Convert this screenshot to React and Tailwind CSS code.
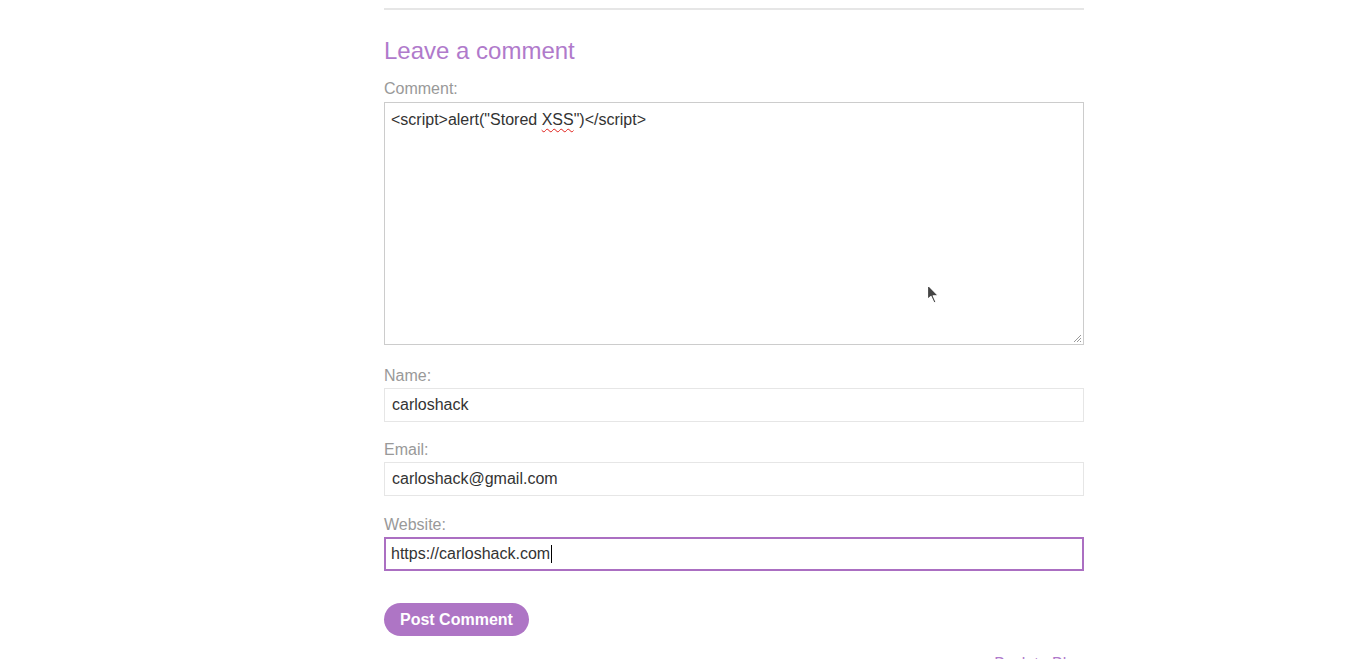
import React from 'react';

const font = { fontFamily: '"Liberation Sans", Arial, sans-serif' };

function Field({ label, children, focused }) {
    return (
        <div className="mt-[21px]">
            <div className="text-[16px] leading-[20px] text-[#999999]">{label}</div>
            <div
                className={`mt-[2px] h-[34px] flex items-center text-[16px] text-[#333333] bg-white ${
                    focused ? 'border-2 border-[#ab6fc2] px-[5px]' : 'border border-[#e6e6e6] px-[7px]'
                }`}
            >
                {children}
            </div>
        </div>
    );
}

export default function App() {
    return (
        <div className="min-h-screen bg-white relative" style={font}>
            <div className="w-[700px] ml-[384px] pt-[8px]">
                {/* divider */}
                <div className="h-[2px] bg-[#e6e6e6]" />

                <h2 className="mt-[26px] text-[24px] leading-[29px] text-[#b07acb]">Leave a comment</h2>

                <div className="mt-[14px] text-[16px] leading-[20px] text-[#999999]">Comment:</div>
                <div className="relative mt-[3px] h-[243px] border border-[#cccccc] px-[6px] pt-[7px] text-[16px] leading-[20px] text-[#333333]">
                    {'<script>alert("Stored '}
                    <span className="underline decoration-wavy decoration-[#e0201a] decoration-1 underline-offset-[3px]">XSS</span>
                    {'")</script>'}
                    {/* resize grip */}
                    <svg className="absolute right-[1px] bottom-[1px]" width="10" height="10" viewBox="0 0 10 10">
                        <path d="M9 2L2 9M9 5L5 9M9 8L8 9" stroke="#999" strokeWidth="1" />
                    </svg>
                </div>

                <Field label="Name:">carloshack</Field>
                <div className="-mt-[3px]">
                    <Field label="Email:">carloshack@gmail.com</Field>
                </div>
                <div className="-mt-[2px]">
                    <Field label="Website:" focused>
                        https://carloshack.com
                        <span className="inline-block w-[1px] h-[18px] bg-black ml-[1px]" />
                    </Field>
                </div>

                <button className="mt-[32px] h-[33px] px-[16px] rounded-full bg-[#ae75c5] text-white font-bold text-[16px]">
                    Post Comment
                </button>

                <div className="mt-[18px] text-right text-[16px] text-[#b07acb] leading-[20px]">Back to Blog</div>
            </div>

            {/* mouse pointer */}
            <svg className="absolute left-[926px] top-[283px]" width="16" height="22" viewBox="0 0 16 22">
                <path d="M1.5 1.5L1.5 16.5L5 13.5L8 20L10 19L7.2 12.8L12.5 12.8Z" fill="#444" stroke="#fff" strokeWidth="1.2" strokeLinejoin="round" />
            </svg>
        </div>
    );
}
